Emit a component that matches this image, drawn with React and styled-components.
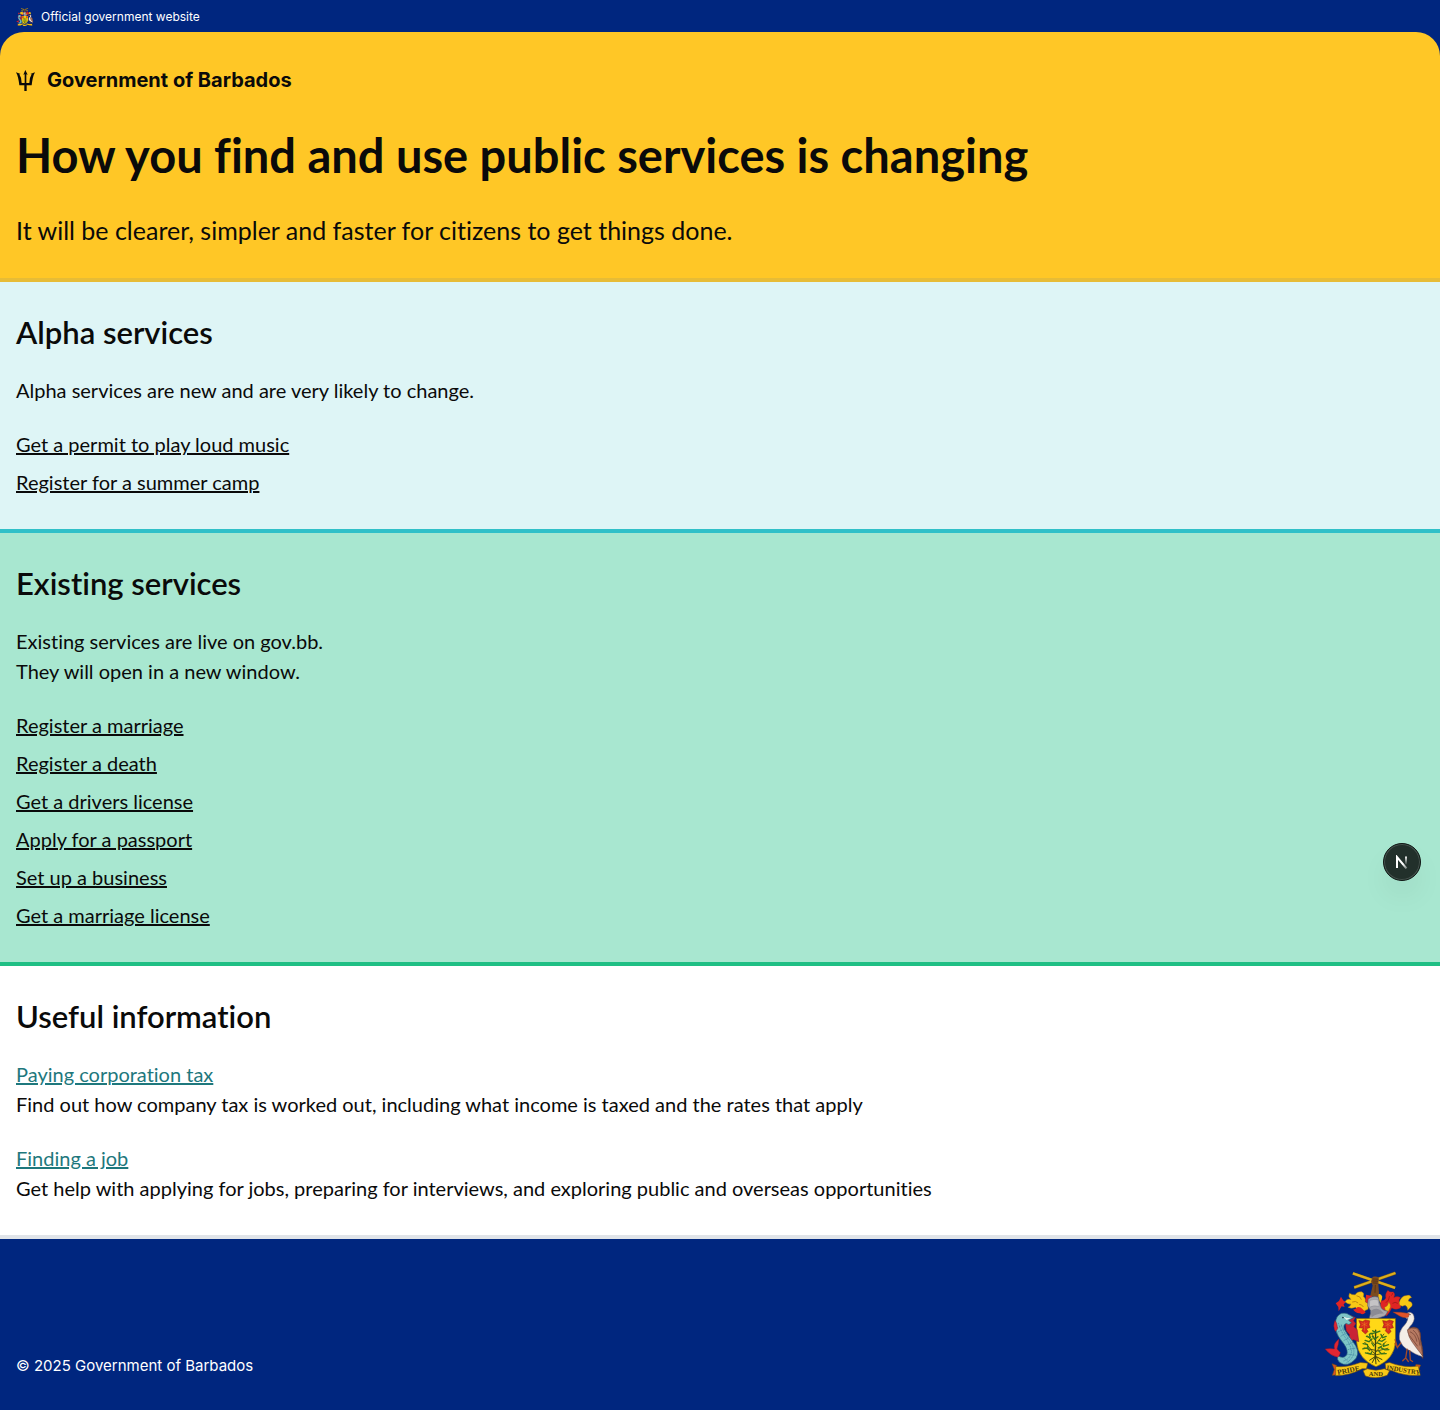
import React from "react";
import styled, { createGlobalStyle } from "styled-components";

const GlobalStyle = createGlobalStyle`
  *, *::before, *::after { box-sizing: border-box; }
  body {
    margin: 0;
    background: #ffffff;
    color: #0a0a0a;
    font-family: Lato, "Open Sans", sans-serif;
    font-size: 20px;
    line-height: 30px;
    font-variant-ligatures: none;
    -webkit-font-smoothing: antialiased;
  }
  h1, h2, p, ul { margin: 0; padding: 0; }
`;

const Page = styled.div`
  background: #00267f;
`;

const OfficialBar = styled.div`
  display: flex;
  align-items: center;
  gap: 8px;
  height: 32px;
  padding: 1px 16px 0;
  color: #ffffff;
  font-family: Inter, sans-serif;
  font-size: 12px;
  line-height: 16px;
`;

const Hero = styled.header`
  display: flex;
  flex-direction: column;
  padding: 32px 16px 24px;
  background: #ffc726;
  border-bottom: 4px solid #e7bc36;
  border-radius: 24px 24px 0 0;
`;

const HomeLink = styled.a`
  display: flex;
  align-items: center;
  align-self: flex-start;
  gap: 12px;
  height: 32px;
  color: inherit;
  font-family: Inter, sans-serif;
  font-size: 20px;
  font-weight: 700;
  text-decoration: none;
`;

const Title = styled.h1`
  margin-top: 32px;
  font-size: 47px;
  font-weight: 700;
  line-height: 55px;
`;

const Lead = styled.p`
  margin-top: 24px;
  font-size: 25px;
  font-weight: 400;
  line-height: 47px;
`;

const tones = {
  alpha: { background: "#def5f6", border: "#30c0c8" },
  existing: { background: "#a8e7d0", border: "#1fbf84" },
  plain: { background: "#ffffff", border: "#e0e4e9" },
};

const Section = styled.section`
  position: relative;
  display: flex;
  flex-direction: column;
  gap: 24px;
  padding: 32px 16px;
  background: ${({ $tone }) => tones[$tone].background};
  border-bottom: 4px solid ${({ $tone }) => tones[$tone].border};
`;

const SectionTitle = styled.h2`
  font-size: 31px;
  font-weight: 600;
  line-height: 37px;
`;

const LinkList = styled.ul`
  display: flex;
  flex-direction: column;
  gap: 8px;
  list-style: none;
`;

const TextLink = styled.a`
  color: ${({ $accent }) => ($accent ? "#1e787d" : "inherit")};
  text-decoration: underline;
  text-decoration-thickness: 2px;
  text-underline-offset: 1px;
`;

const DevButton = styled.button`
  position: absolute;
  right: 19px;
  bottom: 81px;
  display: flex;
  align-items: center;
  justify-content: center;
  width: 38px;
  height: 38px;
  padding: 0;
  border: 1px solid #101815;
  border-radius: 50%;
  background: #22302b;
  box-shadow: inset 0 0 0 1px #47544f, 0 16px 32px -8px rgba(0, 0, 0, 0.14);
  cursor: pointer;
`;

const Footer = styled.footer`
  display: flex;
  align-items: flex-end;
  justify-content: space-between;
  padding: 32px 16px;
  color: #ffffff;
  font-family: Inter, sans-serif;
  font-size: 15px;
  line-height: 24px;
`;

const Crest = ({ width, height, motto }) => (
  <svg width={width} height={height} viewBox="42 30 300 324" aria-hidden="true">
    {/* crossed sugar canes held in a raised fist */}
    <g fill="none">
      <path d="M128 37 L256 81 M257 36 L132 80" stroke="#7d5d10" strokeWidth="9" />
      <path d="M128 37 L256 81 M257 36 L132 80" stroke="#dcae1e" strokeWidth="7" />
    </g>
    <path d="M186 53 Q187 45 195 47 Q207 46 207 56 L205 68 L208 108 L180 108 L188 74 L183 62Z" fill="#7b4b1f" />
    <path d="M188 54 L204 55 M187 60 L204 61 M188 66 L203 67 M196 72 L195 96" stroke="#3f2410" strokeWidth="1.8" />

    {/* mantling, dexter side */}
    <path d="M92 108 L99 119 L107 124 L100 131 L103 139 L94 137 L85 152 L84 139 L76 128 L86 121Z" fill="#e02524" />
    <path d="M104 123 Q110 112 122 116 Q112 107 118 97 Q126 103 135 102 Q141 91 155 93 Q164 97 160 107 Q169 114 166 124 L176 128 L174 146 L164 150 Q158 162 150 152 Q140 150 136 140 Q124 146 113 140 Q121 137 122 130 Q113 132 104 123Z" fill="#f7c815" stroke="#9c6a13" strokeWidth="1.5" />
    <path d="M168 102 L186 106 L178 132 L166 122Z M141 140 Q150 137 157 145 L167 155 Q158 165 150 158 Q138 160 128 146 Q136 148 141 140Z" fill="#e02524" />
    <path d="M126 124 Q137 119 144 127 M139 105 Q151 106 154 117 M147 131 Q156 131 160 139" fill="none" stroke="#b0790e" strokeWidth="2.5" />

    {/* mantling, sinister side */}
    <path d="M206 100 Q214 98 217 108 L213 128 L204 118Z" fill="#f7c815" />
    <path d="M214 120 Q222 122 228 112 Q224 100 234 88 Q240 96 250 93 Q258 100 252 110 Q262 105 272 110 Q265 118 268 126 Q276 132 272 142 Q258 150 246 142 Q240 156 230 166 L208 142Z" fill="#e02524" stroke="#9a1d18" strokeWidth="1" />
    <path d="M268 126 Q274 105 290 104 Q300 100 306 110 Q296 113 296 121 Q311 124 307 136 Q300 142 294 149 Q294 137 286 134 Q278 139 270 134Z M224 140 Q236 136 236 124 Q244 132 241 141 Q238 151 229 158Z" fill="#f7c815" stroke="#9c6a13" strokeWidth="1.3" />
    <path d="M228 126 Q238 120 239 106 M248 128 Q256 122 264 128 M244 104 Q249 102 248 97" fill="none" stroke="#8e1514" strokeWidth="2" />

    {/* helmet */}
    <path d="M174 115 Q186 104 205 109 L211 133 Q215 151 233 151 Q231 166 216 169 Q195 180 177 175 L183 153 L173 136Z" fill="#aaa9ad" stroke="#545564" strokeWidth="2" />
    <path d="M179 119 Q192 114 204 117 L208 137 Q189 133 178 140Z" fill="#c5c4c6" stroke="#767681" strokeWidth="1" />
    <path d="M181 151 Q199 139 212 149 L222 159 Q202 157 185 170Z" fill="#8b8b94" />

    {/* shield with fig tree and two flowers */}
    <path d="M139 174 L257 174 L257 245 Q254 297 198 320 Q143 296 139 244Z" fill="#ffd817" stroke="#7e6010" strokeWidth="2" />
    <g fill="#d82a1e" stroke="#78200f" strokeWidth="1.3">
      <path d="M146 180 L158 183 L165 178 L179 181 L177 193 L180 201 L169 205 L174 213 L166 221 L155 211 L159 203 L147 202 L151 192Z" />
      <path d="M218 180 L230 182 L239 178 L251 182 L247 192 L251 202 L239 205 L244 213 L236 221 L226 211 L230 203 L218 202 L222 192Z" />
    </g>
    <path d="M154 187 L172 197 M172 187 L154 197 M163 184 L163 211 M225 187 L243 197 M243 187 L226 197 M234 184 L234 211" stroke="#e8851f" strokeWidth="1.5" />
    <g fill="none" stroke="#39400f" strokeLinecap="round">
      <path d="M197 209 L196 291" strokeWidth="4" />
      <path d="M196 283 L164 246 M196 276 L228 244 M197 257 L172 226 M197 252 L222 221 M196 238 L184 218 M196 270 L162 263 M198 273 L234 264 M196 285 L173 278 M198 284 L224 278" strokeWidth="2.5" />
      <path d="M196 289 L179 300 M196 289 L187 307 M196 289 L198 311 M197 289 L208 305 M198 289 L216 298" strokeWidth="3" />
    </g>
    <path
      d="M180 220 L193 218 M188 211 L199 216 L210 212 M169 228 L181 232 L178 222 M213 222 L218 232 L229 228 M165 240 L177 244 L186 236 M206 240 L216 243 L226 236 M159 250 L172 253 L174 262 M222 250 L221 258 L236 253 M158 266 L171 263 L179 271 M214 263 L225 269 L237 268 M166 278 L182 282 L185 275 M207 273 L215 281 L229 280 M185 248 L191 257 M202 248 L213 252 M187 228 L194 237 L204 229 M205 263 L214 259"
      fill="none" stroke="#35741c" strokeWidth="4" strokeLinecap="round"
    />

    {/* dolphin supporter */}
    <path d="M102 170 L120 164 L136 171 L130 181 L137 189 L131 199 L141 207 L146 244 L130 238 L112 246 L118 223 L108 211 L106 195Z" fill="#c92335" stroke="#701c32" strokeWidth="1.5" />
    <path d="M75 190 Q76 164 94 158 Q109 154 121 165 L131 171 L115 179 L124 187 Q116 196 108 189 Q98 192 102 206 Q110 222 126 241 Q152 272 138 294 Q112 324 88 307 Q78 298 82 286 Q100 298 109 284 Q115 271 101 251 Q80 228 75 205Z" fill="#7dc4c6" stroke="#235b77" strokeWidth="2" />
    <path d="M84 187 Q89 205 101 226 Q122 252 124 275 Q119 298 98 303 M93 192 Q98 212 112 231 Q133 258 131 278 Q126 298 108 308 M80 202 L96 195 M82 215 L102 205 M91 228 L111 216 M100 241 L120 230 M108 254 L131 245 M113 268 L138 263 M111 282 L137 285 M100 292 L116 306" fill="none" stroke="#34769b" strokeWidth="1.8" strokeDasharray="4 2" />
    <path d="M98 168 L110 172 L122 172 L109 178Z" fill="#e9f4ee" />
    <circle cx="98" cy="171" r="2.5" fill="#172e40" />
    <path d="M74 180 Q66 196 75 213 L82 205 L79 188Z M86 236 Q85 253 80 266 L90 277 Q89 288 82 291 Q60 287 44 266 Q62 264 72 266 Q68 249 86 236Z" fill="#e12632" stroke="#7e1730" strokeWidth="1.3" />

    {/* pelican supporter */}
    <path d="M292 209 Q307 194 325 204 Q336 217 333 236 Q342 269 340 295 L329 280 L316 270 Q302 262 294 244Z" fill="#b77a62" stroke="#5a302a" strokeWidth="2" />
    <path d="M292 158 Q301 151 310 160 Q319 174 307 191 Q293 203 295 216 Q311 237 318 256 Q333 271 340 290 Q315 282 300 271 Q277 262 269 237 Q266 217 278 201 Q294 185 295 173 Q288 175 285 169Z" fill="#f4eee7" stroke="#80706d" strokeWidth="1.5" />
    <path d="M293 208 Q305 200 320 204 Q334 216 332 240 L340 288 Q322 266 308 246 Q296 230 293 208Z" fill="#b77a62" stroke="#5a302a" strokeWidth="1.5" />
    <path d="M301 214 Q318 220 322 244 M310 209 Q328 222 331 256 M299 225 Q310 239 324 258" fill="none" stroke="#603329" strokeWidth="1.8" />
    <path d="M249 154 L274 155 L299 159 L296 170 Q280 174 269 166Z" fill="#e0532a" stroke="#79321b" strokeWidth="1.3" />
    <circle cx="301" cy="162" r="2" fill="#3a241e" />
    <path d="M273 248 L263 262 L256 238 M263 262 L256 250 M292 267 L288 293 L279 302 M288 293 L296 304 M300 271 L302 300 L309 304" fill="none" stroke="#a64b27" strokeWidth="4" strokeLinecap="round" />

    {/* motto ribbon */}
    <g fill="#f8c718" stroke="#78520f" strokeWidth="1.8">
      <path d="M65 311 L79 316 L78 344 L66 346 L72 328Z M333 315 L319 313 L313 336 L330 345 L326 330Z" fill="#dd5221" />
      <path d="M76 319 Q109 323 151 307 L173 309 L169 326 L156 326 Q117 347 76 347Z" />
      <path d="M226 310 L239 307 Q282 324 326 318 L332 346 Q284 349 247 332 L228 328Z" />
      <path d="M159 332 L172 326 Q198 335 223 326 L239 332 L232 346 Q198 359 166 348Z" />
    </g>
    {motto && (
      <g fontFamily="'Liberation Serif', serif" fontWeight="700" fill="#49370b" textAnchor="middle">
        <text fontSize="22" transform="translate(116 338) rotate(-11)">PRIDE</text>
        <text fontSize="20" x="198" y="349">AND</text>
        <text fontSize="20" transform="translate(280 337) rotate(9)">INDUSTRY</text>
      </g>
    )}
  </svg>
);

const Trident = () => (
  <svg width="19" height="21" viewBox="48 207 57 63" fill="currentColor" aria-hidden="true">
    <path d="M76 207 L83 221 L79 220 L79 246 L88 246 Q88 230 95 220 L91 219 L105 214 Q98 226 95 253 L80 253 L80 270 L73 270 L73 253 L58 253 Q55 226 48 214 L62 219 L58 220 Q65 230 65 246 L74 246 L74 220 L70 221Z" />
  </svg>
);

const NextMark = () => (
  <svg width="14" height="14" viewBox="0 0 14 14" fill="none" aria-hidden="true">
    <defs>
      <linearGradient id="stem" x1="0" y1="1" x2="0" y2="10" gradientUnits="userSpaceOnUse">
        <stop stopColor="#ffffff" />
        <stop offset="1" stopColor="#ffffff" stopOpacity="0" />
      </linearGradient>
      <linearGradient id="diagonal" x1="8" y1="9" x2="12" y2="14" gradientUnits="userSpaceOnUse">
        <stop stopColor="#ffffff" />
        <stop offset="1" stopColor="#ffffff" stopOpacity="0.3" />
      </linearGradient>
    </defs>
    <path d="M2 13 V2 L11.500 13.500" stroke="url(#diagonal)" strokeWidth="2" />
    <path d="M11 1.500 V9.500" stroke="url(#stem)" strokeWidth="2" />
  </svg>
);

const alphaServices = ["Get a permit to play loud music", "Register for a summer camp"];

const existingServices = [
  "Register a marriage",
  "Register a death",
  "Get a drivers license",
  "Apply for a passport",
  "Set up a business",
  "Get a marriage license",
];

const articles = [
  {
    title: "Paying corporation tax",
    summary: "Find out how company tax is worked out, including what income is taxed and the rates that apply",
  },
  {
    title: "Finding a job",
    summary: "Get help with applying for jobs, preparing for interviews, and exploring public and overseas opportunities",
  },
];

const ServiceLinks = ({ items }) => (
  <LinkList>
    {items.map((item) => (
      <li key={item}>
        <TextLink href="#">{item}</TextLink>
      </li>
    ))}
  </LinkList>
);

export default function App() {
  return (
    <Page>
      <GlobalStyle />
      <OfficialBar>
        <Crest width={17} height={18} />
        <span>Official government website</span>
      </OfficialBar>
      <Hero>
        <HomeLink href="#">
          <Trident />
          <span>Government of Barbados</span>
        </HomeLink>
        <Title>How you find and use public services is changing</Title>
        <Lead>It will be clearer, simpler and faster for citizens to get things done.</Lead>
      </Hero>
      <main>
        <Section $tone="alpha">
          <SectionTitle>Alpha services</SectionTitle>
          <p>Alpha services are new and are very likely to change.</p>
          <ServiceLinks items={alphaServices} />
        </Section>
        <Section $tone="existing">
          <SectionTitle>Existing services</SectionTitle>
          <p>
            Existing services are live on gov.bb.
            <br />
            They will open in a new window.
          </p>
          <ServiceLinks items={existingServices} />
          <DevButton type="button" aria-label="Open developer tools">
            <NextMark />
          </DevButton>
        </Section>
        <Section $tone="plain">
          <SectionTitle>Useful information</SectionTitle>
          {articles.map(({ title, summary }) => (
            <div key={title}>
              <TextLink href="#" $accent>{title}</TextLink>
              <p>{summary}</p>
            </div>
          ))}
        </Section>
      </main>
      <Footer>
        <span>© 2025 Government of Barbados</span>
        <Crest width={100} height={107} motto />
      </Footer>
    </Page>
  );
}
